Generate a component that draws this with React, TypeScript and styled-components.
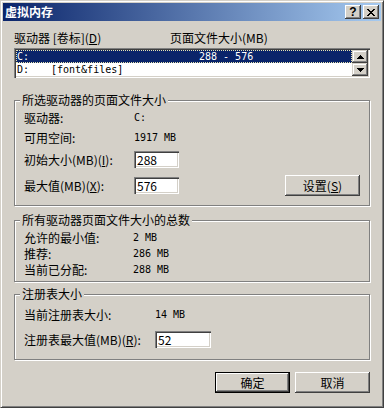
import React from 'react';
import styled, { createGlobalStyle } from 'styled-components';

const GlobalStyle = createGlobalStyle`
  html, body {
    margin: 0;
    padding: 0;
    background: #d4d0c8;
  }
  body {
    font-family: 'Noto Sans CJK SC', 'Liberation Sans', sans-serif;
    font-size: 12px;
    color: #000;
  }
  * {
    box-sizing: border-box;
  }
`;

const Window = styled.div`
  width: 384px;
  height: 408px;
  background: #d4d0c8;
  border: 1px solid;
  border-color: #d4d0c8 #404040 #404040 #d4d0c8;
  box-shadow: inset 1px 1px 0 #fff, inset -1px -1px 0 #808080;
  padding: 2px;
  display: flex;
  flex-direction: column;
`;

const TitleBar = styled.div`
  height: 18px;
  display: flex;
  align-items: center;
  gap: 2px;
  padding: 0 2px;
  background: linear-gradient(to right, #0a246a, #a6caf0);
`;

const Title = styled.div`
  flex: 1;
  color: #fff;
  font-weight: bold;
  line-height: 18px;
`;

const CaptionButton = styled.div`
  width: 16px;
  height: 14px;
  display: flex;
  align-items: center;
  justify-content: center;
  background: #d4d0c8;
  box-shadow: inset -1px -1px 0 #404040, inset 1px 1px 0 #fff,
    inset -2px -2px 0 #808080, inset 2px 2px 0 #d4d0c8;
  font-family: 'Liberation Sans', sans-serif;
  font-weight: bold;
  font-size: 12px;
  line-height: 12px;
`;

const Body = styled.div`
  flex: 1;
  display: flex;
  flex-direction: column;
  padding: 0 11px;
`;

const Header = styled.div`
  display: grid;
  grid-template-columns: 156px 1fr;
  margin-top: 10px;
  line-height: 14px;
`;

const List = styled.div`
  margin-top: 3px;
  height: 30px;
  padding: 2px;
  display: flex;
  background: #fff;
  box-shadow: inset 1px 1px 0 #808080, inset 2px 2px 0 #404040,
    inset -1px -1px 0 #fff, inset -2px -2px 0 #d4d0c8;
`;

const ListRows = styled.div`
  flex: 1;
  display: flex;
  flex-direction: column;
`;

const ListRow = styled.div<{ $selected?: boolean }>`
  height: 13px;
  display: grid;
  grid-template-columns: 34px 148px 1fr;
  align-items: center;
  padding-left: 1px;
  font-family: 'DejaVu Sans Mono', 'Liberation Mono', monospace;
  font-size: 10px;
  line-height: 12px;
  background: ${p => (p.$selected ? '#0a246a' : '#fff')};
  color: ${p => (p.$selected ? '#fff' : '#000')};
  outline: ${p => (p.$selected ? '1px dotted #e8e4b0' : 'none')};
  outline-offset: -1px;
`;

const ScrollBar = styled.div`
  width: 16px;
  display: flex;
  flex-direction: column;
`;

const ScrollButton = styled.div`
  height: 13px;
  display: flex;
  align-items: center;
  justify-content: center;
  background: #d4d0c8;
  box-shadow: inset -1px -1px 0 #404040, inset 1px 1px 0 #d4d0c8,
    inset -2px -2px 0 #808080, inset 2px 2px 0 #fff;
`;

const Group = styled.div<{ $top: number; $bottom: number }>`
  margin-top: ${p => p.$top}px;
  padding-bottom: ${p => p.$bottom}px;
  display: flex;
  flex-direction: column;
  border: 1px solid #808080;
  box-shadow: inset 1px 1px 0 #fff, 1px 1px 0 #fff;
`;

const Legend = styled.div`
  align-self: flex-start;
  margin: -8px 0 0 5px;
  padding: 0 2px;
  background: #d4d0c8;
  line-height: 14px;
`;

const Field = styled.div<{ $top: number; $h: number; $label: number }>`
  display: grid;
  grid-template-columns: ${p => p.$label}px auto 1fr;
  align-items: center;
  height: ${p => p.$h}px;
  margin-top: ${p => p.$top}px;
  padding: 0 9px;
  line-height: 14px;
`;

const Value = styled.span`
  font-family: 'DejaVu Sans Mono', 'Liberation Mono', monospace;
  font-size: 10px;
  line-height: 12px;
`;

const TextBox = styled.input<{ $w: number }>`
  width: ${p => p.$w}px;
  height: 17px;
  padding: 0 0 0 3px;
  border: none;
  background: #fff;
  font: inherit;
  line-height: 17px;
  color: #000;
  box-shadow: inset 1px 1px 0 #808080, inset 2px 2px 0 #404040,
    inset -1px -1px 0 #fff, inset -2px -2px 0 #d4d0c8;
  outline: none;
`;

const PushButton = styled.button<{ $default?: boolean }>`
  width: 75px;
  height: 21px;
  padding: 0;
  justify-self: end;
  font: inherit;
  line-height: 14px;
  color: #000;
  background: #d4d0c8;
  border: ${p => (p.$default ? '1px solid #000' : 'none')};
  box-shadow: inset -1px -1px 0 #404040, inset 1px 1px 0 #fff,
    inset -2px -2px 0 #808080, inset 2px 2px 0 #d4d0c8;
`;

const Footer = styled.div`
  display: flex;
  justify-content: flex-end;
  gap: 5px;
  margin-top: 12px;
`;

const Key = styled.u`
  text-decoration: underline;
  text-underline-offset: 1px;
`;

const Arrow = ({ down }: { down?: boolean }) => (
  <svg width="7" height="4" viewBox="0 0 7 4" style={{ transform: down ? 'scaleY(-1)' : undefined }}>
    <rect x="3" y="0" width="1" height="1" />
    <rect x="2" y="1" width="3" height="1" />
    <rect x="1" y="2" width="5" height="1" />
    <rect x="0" y="3" width="7" height="1" />
  </svg>
);

const CloseGlyph = () => (
  <svg width="8" height="7" viewBox="0 0 8 7">
    <path d="M0 0h2v1H0zM6 0h2v1H6zM1 1h2v1H1zM5 1h2v1H5zM2 2h4v1H2zM3 3h2v1H3zM2 4h4v1H2zM1 5h2v1H1zM5 5h2v1H5zM0 6h2v1H0zM6 6h2v1H6z" />
  </svg>
);

export default function App() {
  return (
    <>
      <GlobalStyle />
      <Window>
        <TitleBar>
          <Title>虚拟内存</Title>
          <CaptionButton>?</CaptionButton>
          <CaptionButton>
            <CloseGlyph />
          </CaptionButton>
        </TitleBar>
        <Body>
          <Header>
            <span>
              驱动器 [卷标](<Key>D</Key>)
            </span>
            <span>页面文件大小(MB)</span>
          </Header>
          <List>
            <ListRows>
              <ListRow $selected>
                <span>C:</span>
                <span></span>
                <span>288 - 576</span>
              </ListRow>
              <ListRow>
                <span>D:</span>
                <span>[font&amp;files]</span>
                <span></span>
              </ListRow>
            </ListRows>
            <ScrollBar>
              <ScrollButton>
                <Arrow />
              </ScrollButton>
              <ScrollButton>
                <Arrow down />
              </ScrollButton>
            </ScrollBar>
          </List>

          <Group $top={22} $bottom={9}>
            <Legend>所选驱动器的页面文件大小</Legend>
            <Field $top={4} $h={14} $label={110}>
              <span>驱动器:</span>
              <Value>C:</Value>
            </Field>
            <Field $top={6} $h={14} $label={110}>
              <span>可用空间:</span>
              <Value>1917 MB</Value>
            </Field>
            <Field $top={6} $h={17} $label={110}>
              <span>
                初始大小(MB)(<Key>I</Key>):
              </span>
              <TextBox $w={45} defaultValue="288" />
            </Field>
            <Field $top={7} $h={21} $label={110}>
              <span>
                最大值(MB)(<Key>X</Key>):
              </span>
              <TextBox $w={45} defaultValue="576" />
              <PushButton>
                设置(<Key>S</Key>)
              </PushButton>
            </Field>
          </Group>

          <Group $top={14} $bottom={3}>
            <Legend>所有驱动器页面文件大小的总数</Legend>
            <Field $top={3} $h={16} $label={109}>
              <span>允许的最小值:</span>
              <Value>2 MB</Value>
            </Field>
            <Field $top={0} $h={16} $label={109}>
              <span>推荐:</span>
              <Value>286 MB</Value>
            </Field>
            <Field $top={0} $h={16} $label={109}>
              <span>当前已分配:</span>
              <Value>288 MB</Value>
            </Field>
          </Group>

          <Group $top={12} $bottom={11}>
            <Legend>注册表大小</Legend>
            <Field $top={7} $h={14} $label={131}>
              <span>当前注册表大小:</span>
              <Value>14 MB</Value>
            </Field>
            <Field $top={9} $h={17} $label={131}>
              <span>
                注册表最大值(MB)(<Key>R</Key>):
              </span>
              <TextBox $w={56} defaultValue="52" />
            </Field>
          </Group>

          <Footer>
            <PushButton $default>确定</PushButton>
            <PushButton>取消</PushButton>
          </Footer>
        </Body>
      </Window>
    </>
  );
}
